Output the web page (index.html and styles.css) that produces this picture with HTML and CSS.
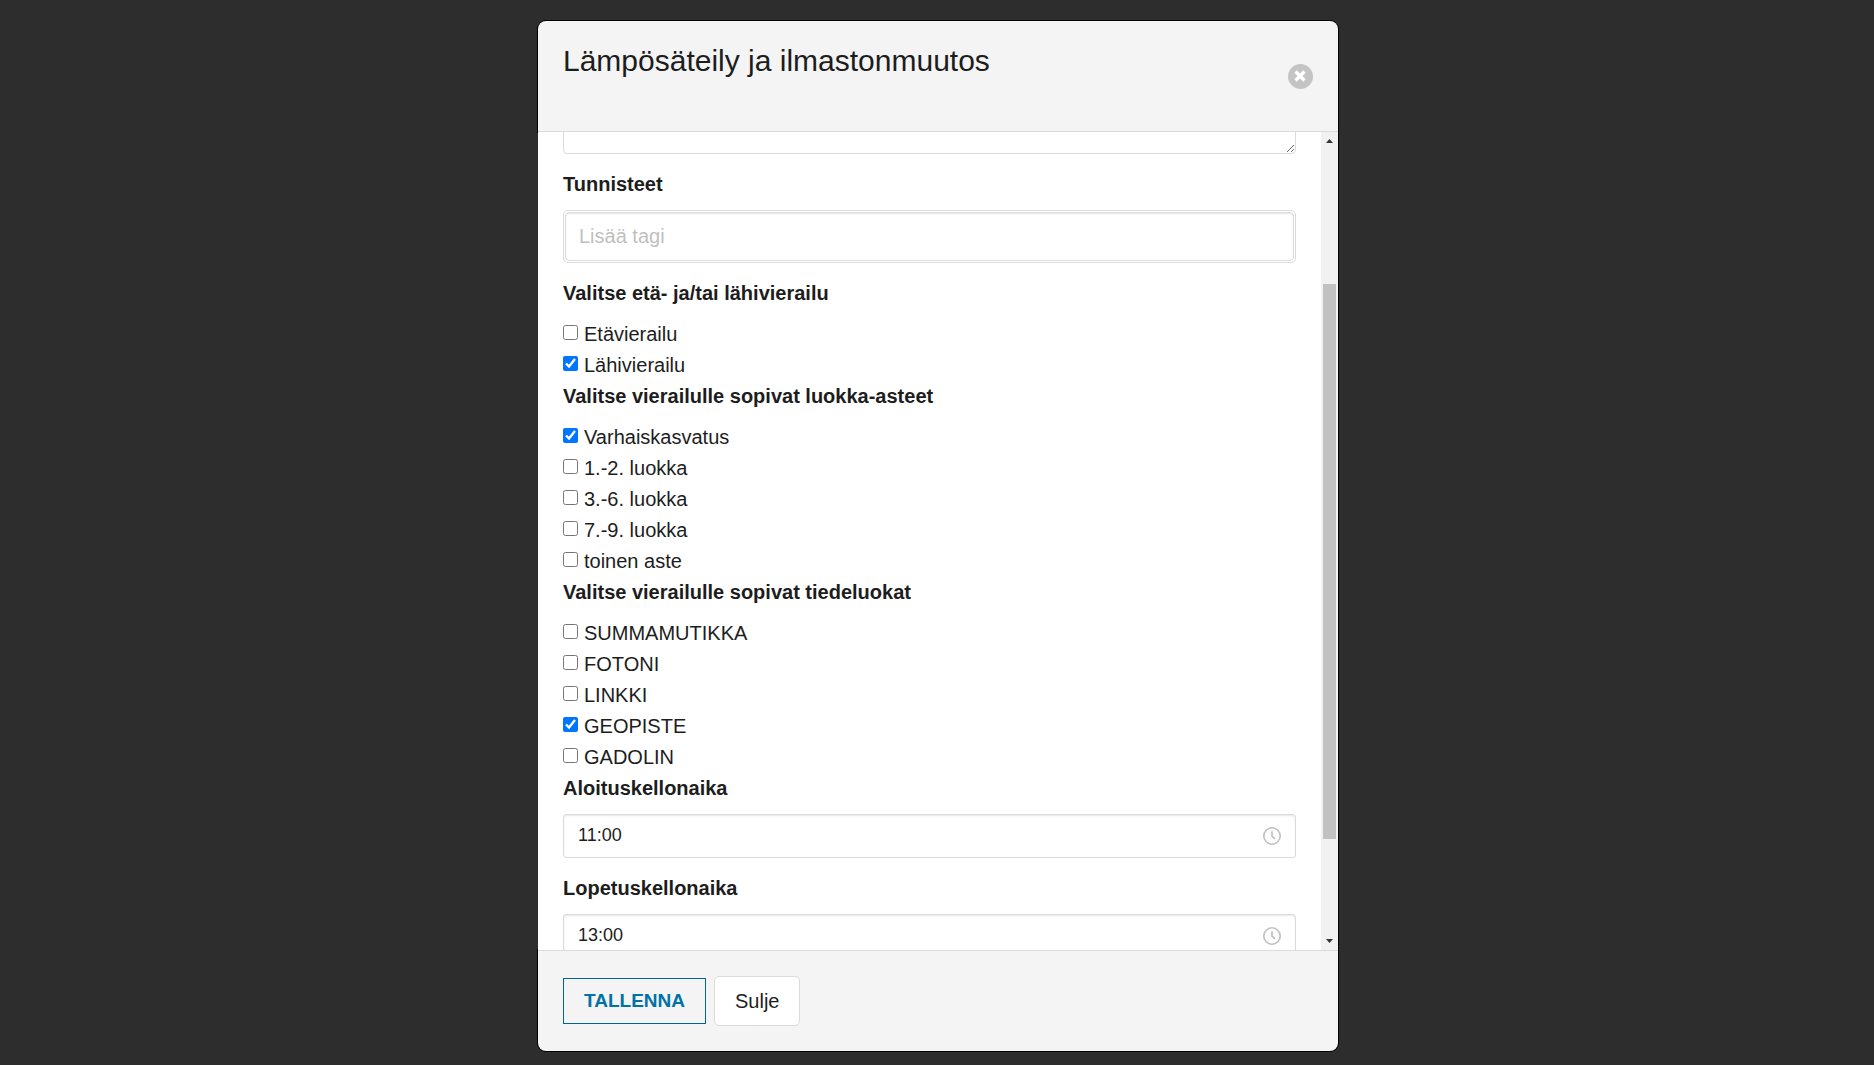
FILE: index.html
```
<!DOCTYPE html>
<html lang="fi">
<head>
<meta charset="utf-8">
<meta name="viewport" content="width=device-width, initial-scale=1">
<title>Lämpösäteily ja ilmastonmuutos</title>
<link rel="stylesheet" href="styles.css">
</head>
<body>
<form class="modal" role="dialog" aria-labelledby="modal-title">
  <header class="modal-head">
    <h1 class="modal-title" id="modal-title">Lämpösäteily ja ilmastonmuutos</h1>
    <button class="close" type="button" aria-label="Sulje ikkuna">
      <svg viewBox="0 0 25 25" width="25" height="25" aria-hidden="true"><path d="M7.5 7.5 16.5 16.5M16.5 7.5 7.5 16.5" fill="none" stroke="#fff" stroke-width="3.4"/></svg>
    </button>
  </header>

  <div class="modal-body">
    <div class="fields">
      <textarea class="description" aria-label="Kuvaus"></textarea>

      <label class="label" for="tags">Tunnisteet</label>
      <div class="tags-box"><input class="tags-input" id="tags" type="text" placeholder="Lisää tagi"></div>

      <fieldset class="group">
        <legend class="label">Valitse etä- ja/tai lähivierailu</legend>
        <label class="check"><input type="checkbox">Etävierailu</label>
        <label class="check"><input type="checkbox" checked>Lähivierailu</label>
      </fieldset>

      <fieldset class="group">
        <legend class="label">Valitse vierailulle sopivat luokka-asteet</legend>
        <label class="check"><input type="checkbox" checked>Varhaiskasvatus</label>
        <label class="check"><input type="checkbox">1.-2. luokka</label>
        <label class="check"><input type="checkbox">3.-6. luokka</label>
        <label class="check"><input type="checkbox">7.-9. luokka</label>
        <label class="check"><input type="checkbox">toinen aste</label>
      </fieldset>

      <fieldset class="group">
        <legend class="label">Valitse vierailulle sopivat tiedeluokat</legend>
        <label class="check"><input type="checkbox">SUMMAMUTIKKA</label>
        <label class="check"><input type="checkbox">FOTONI</label>
        <label class="check"><input type="checkbox">LINKKI</label>
        <label class="check"><input type="checkbox" checked>GEOPISTE</label>
        <label class="check"><input type="checkbox">GADOLIN</label>
      </fieldset>

      <label class="label" for="start">Aloituskellonaika</label>
      <div class="time-box">
        <input class="time-input" id="start" type="text" value="11:00">
        <svg class="clock" viewBox="0 0 18 18" width="18" height="18" aria-hidden="true"><circle cx="9" cy="9" r="8.2"/><path d="M9 4.2V9.2L12 11.9"/></svg>
      </div>

      <label class="label" for="end">Lopetuskellonaika</label>
      <div class="time-box">
        <input class="time-input" id="end" type="text" value="13:00">
        <svg class="clock" viewBox="0 0 18 18" width="18" height="18" aria-hidden="true"><circle cx="9" cy="9" r="8.2"/><path d="M9 4.2V9.2L12 11.9"/></svg>
      </div>
    </div>

    <div class="scrollbar" aria-hidden="true">
      <svg class="arrow" viewBox="0 0 17 21" width="17" height="21"><path d="M5 11h7L8.5 7z" fill="#333"/></svg>
      <div class="track"><div class="thumb"></div></div>
      <svg class="arrow" viewBox="0 0 17 21" width="17" height="21"><path d="M5 10h7L8.5 14z" fill="#333"/></svg>
    </div>
  </div>

  <footer class="modal-foot">
    <button class="save" type="submit">TALLENNA</button>
    <button class="cancel" type="button">Sulje</button>
  </footer>
</form>
</body>
</html>
```
FILE: styles.css
```
*,
*::before,
*::after {
  box-sizing: border-box;
}

body {
  display: flex;
  justify-content: center;
  height: 100vh;
  margin: 0;
  padding: 21px 20px 14px 22px;
  background: #2d2d2d;
  color: #1d1d1d;
  font: 20px/31px "Liberation Sans", Arial, sans-serif;
}

button,
input,
textarea {
  margin: 0;
  font: inherit;
  color: inherit;
}

.modal {
  display: flex;
  flex-direction: column;
  width: 100%;
  max-width: 800px;
}

.modal-head,
.modal-foot {
  display: flex;
  flex-shrink: 0;
  padding: 25px;
  background: #f4f4f4;
  box-shadow: 0 0 0 1px #000;
}

.modal-head {
  align-items: center;
  justify-content: space-between;
  border-bottom: 1px solid #dbdbdb;
  border-radius: 8px 8px 0 0;
}

.modal-title {
  margin: 0 0 30px;
  font-size: 30px;
  line-height: 30px;
  font-weight: 400;
}

.close {
  width: 25px;
  height: 25px;
  padding: 0;
  border: 0;
  border-radius: 50%;
  background: #c4c4c4;
}

.close svg {
  display: block;
}

.modal-body {
  position: relative;
  display: flex;
  flex: 1;
  min-height: 0;
  overflow: hidden;
  background: #fff;
  box-shadow: 1px 0 0 #000;
}

.fields {
  flex: 1;
  padding: 0 25px;
}

/* The form is scrolled down, so only the foot of the text area shows. */
.description {
  display: block;
  width: 100%;
  height: 150px;
  margin: -128px 0 15px;
  border: 1px solid #dbdbdb;
  border-radius: 4px;
  resize: vertical;
}

.label {
  display: block;
  margin-bottom: 10px;
  padding: 0;
  font-weight: 700;
}

.tags-box {
  height: 53px;
  margin-bottom: 15px;
  padding: 1px;
  border: 1px solid #dbdbdb;
  border-radius: 5px;
}

.tags-input {
  display: block;
  width: 100%;
  height: 100%;
  padding: 0 13px 1px;
  border: 1px solid #dbdbdb;
  border-radius: 4px;
  box-shadow: inset 0 1px 2px rgba(10, 10, 10, 0.1);
}

.tags-input::placeholder {
  color: #bfbfbf;
}

.group {
  min-width: 0;
  margin: 0;
  padding: 0;
  border: 0;
}

.check {
  display: flex;
  align-items: center;
  gap: 6px;
}

.check input {
  width: 15px;
  height: 15px;
  margin-bottom: 4px;
}

.time-box {
  display: flex;
  align-items: center;
  height: 44px;
  margin-bottom: 15px;
  padding: 0 14px;
  border: 1px solid #dbdbdb;
  border-radius: 3px;
  box-shadow: inset 0 1px 2px rgba(10, 10, 10, 0.1);
}

.time-input {
  flex: 1;
  min-width: 0;
  height: 40px;
  padding: 0 0 2px;
  border: 0;
  background: none;
  font-size: 18px;
}

.clock {
  fill: none;
  stroke: #bfbfbf;
  stroke-width: 1.6;
}

.scrollbar {
  display: flex;
  flex-direction: column;
  width: 17px;
  background: #f1f1f1;
}

.arrow {
  display: block;
  flex-shrink: 0;
}

.track {
  display: flex;
  flex: 1;
  flex-direction: column;
  align-items: center;
  justify-content: flex-start;
  padding-top: 131px;
}

.thumb {
  width: 13px;
  height: 86%;
  background: #c1c1c1;
}

.modal-foot {
  align-items: center;
  gap: 8px;
  border-top: 1px solid #dbdbdb;
  border-radius: 0 0 8px 8px;
}

.save {
  height: 46px;
  padding: 0 20px 2px;
  border: 1px solid #00639c;
  background: #f4f4f4;
  color: #0072a5;
  font-size: 19px;
  font-weight: 700;
}

.cancel {
  height: 50px;
  padding: 0 20px;
  border: 1px solid #dbdbdb;
  border-radius: 5px;
  background: #fff;
}
```
